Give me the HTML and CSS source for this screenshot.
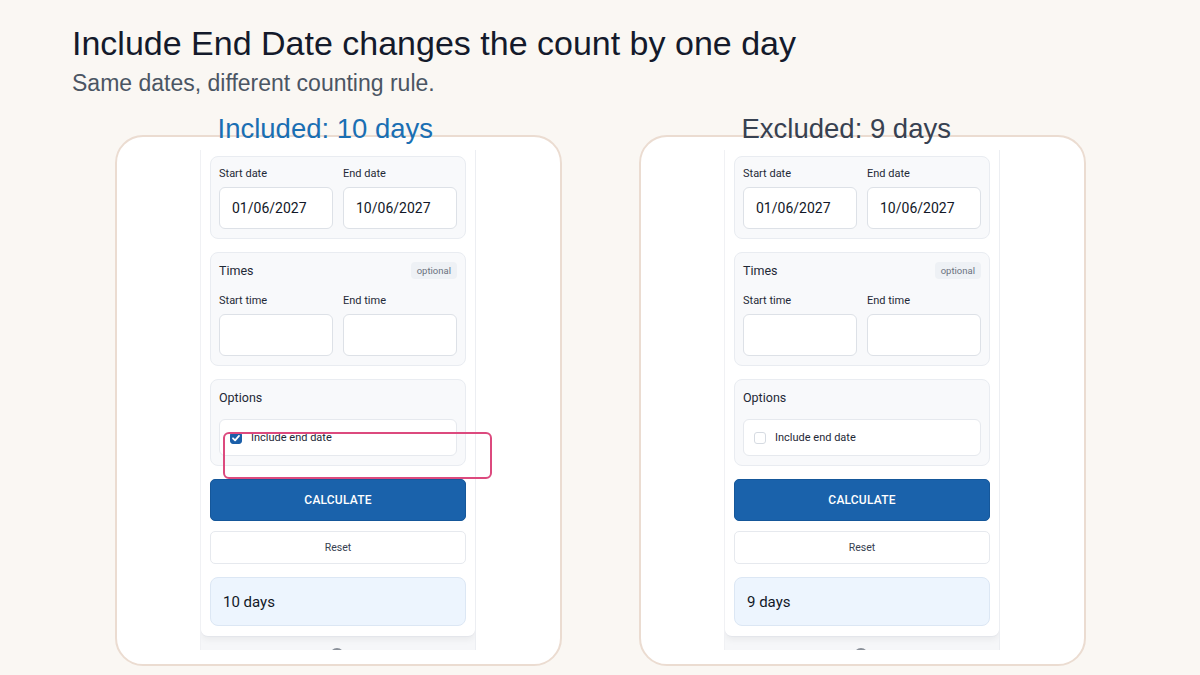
FILE: index.html
```html
<!DOCTYPE html>
<html lang="en">
<head>
    <meta charset="UTF-8">
    <meta name="viewport" content="width=device-width, initial-scale=1.0">
    <title>Include End Date</title>
    <link rel="stylesheet" href="styles.css">
</head>
<body>
    <div class="header">
        <h1>Include End Date changes the count by one day</h1>
        <p class="subtitle">Same dates, different counting rule.</p>
    </div>

    <div class="compare">
        <div class="column">
            <div class="panel-label included">Included: 10 days</div>
            <div class="panel">
                <div class="shot">
                    <div class="page">
                        <div class="form">
                            <div class="section">
                                <div class="field-row">
                                    <div class="field">
                                        <div class="field-label">Start date</div>
                                        <div class="input">01/06/2027</div>
                                    </div>
                                    <div class="field">
                                        <div class="field-label">End date</div>
                                        <div class="input">10/06/2027</div>
                                    </div>
                                </div>
                            </div>
                            <div class="section">
                                <div class="section-head">
                                    <span>Times</span>
                                    <span class="badge">optional</span>
                                </div>
                                <div class="field-row">
                                    <div class="field">
                                        <div class="field-label">Start time</div>
                                        <div class="input"></div>
                                    </div>
                                    <div class="field">
                                        <div class="field-label">End time</div>
                                        <div class="input"></div>
                                    </div>
                                </div>
                            </div>
                            <div class="section">
                                <div class="section-head"><span>Options</span></div>
                                <div class="check-row">
                                    <span class="checkbox checked">
                                        <svg width="12" height="12" viewBox="0 0 12 12"><polyline points="3,6.3 5.1,8.3 9,3.9" fill="none" stroke="#fff" stroke-width="1.8" stroke-linecap="round" stroke-linejoin="round"/></svg>
                                    </span>
                                    Include end date
                                </div>
                            </div>
                            <div class="btn btn-primary">CALCULATE</div>
                            <div class="btn btn-secondary">Reset</div>
                            <div class="result">10 days</div>
                        </div>
                        <div class="page-footer"><span class="footer-icon"></span></div>
                    </div>
                    <div class="highlight"></div>
                </div>
            </div>
        </div>

        <div class="column">
            <div class="panel-label excluded">Excluded: 9 days</div>
            <div class="panel">
                <div class="shot">
                    <div class="page">
                        <div class="form">
                            <div class="section">
                                <div class="field-row">
                                    <div class="field">
                                        <div class="field-label">Start date</div>
                                        <div class="input">01/06/2027</div>
                                    </div>
                                    <div class="field">
                                        <div class="field-label">End date</div>
                                        <div class="input">10/06/2027</div>
                                    </div>
                                </div>
                            </div>
                            <div class="section">
                                <div class="section-head">
                                    <span>Times</span>
                                    <span class="badge">optional</span>
                                </div>
                                <div class="field-row">
                                    <div class="field">
                                        <div class="field-label">Start time</div>
                                        <div class="input"></div>
                                    </div>
                                    <div class="field">
                                        <div class="field-label">End time</div>
                                        <div class="input"></div>
                                    </div>
                                </div>
                            </div>
                            <div class="section">
                                <div class="section-head"><span>Options</span></div>
                                <div class="check-row">
                                    <span class="checkbox"></span>
                                    Include end date
                                </div>
                            </div>
                            <div class="btn btn-primary">CALCULATE</div>
                            <div class="btn btn-secondary">Reset</div>
                            <div class="result">9 days</div>
                        </div>
                        <div class="page-footer"><span class="footer-icon"></span></div>
                    </div>
                </div>
            </div>
        </div>
    </div>
</body>
</html>
```

FILE: styles.css
```css
* {
    margin: 0;
    padding: 0;
    box-sizing: border-box;
}

body {
    font-family: 'Liberation Sans', Arial, sans-serif;
    background: #faf7f3;
    width: 1200px;
    height: 675px;
    overflow: hidden;
}

.header {
    padding: 24px 72px 0;
}

.header h1 {
    font-size: 34px;
    line-height: 39px;
    font-weight: 400;
    color: #141a2b;
}

.subtitle {
    margin-top: 7px;
    font-size: 23px;
    line-height: 26px;
    color: #4b5563;
}

.compare {
    display: flex;
    justify-content: center;
    gap: 77px;
    margin-top: 17px;
}

.column {
    width: 447px;
}

.panel-label {
    position: relative;
    z-index: 1;
    margin-left: 103px;
    margin-bottom: -10px;
    font-size: 27.5px;
    line-height: 32px;
}

.panel-label.included {
    color: #1a6fb3;
}

.panel-label.excluded {
    color: #374151;
}

.panel {
    height: 531px;
    padding-top: 13px;
    background: #fff;
    border: 2px solid #ebdcd1;
    border-radius: 28px;
}

.shot {
    position: relative;
    width: 276px;
    height: 500px;
    margin: 0 auto;
}

.page {
    height: 100%;
    overflow: hidden;
    background: #f6f7f9;
    border-left: 1px solid #f0f1f4;
    border-right: 1px solid #eceef2;
    font-family: Roboto, 'Liberation Sans', sans-serif;
}

.form {
    background: #fff;
    padding: 6px 9px 10px 9px;
    border-radius: 0 0 7px 7px;
    border-bottom: 1px solid #e4e6eb;
    box-shadow: 0 3px 6px rgba(0, 0, 0, 0.05);
}

.section {
    background: #f8f9fb;
    border: 1px solid #e9ecf1;
    border-radius: 8px;
    padding: 8px 8px 9px;
    margin-bottom: 13px;
}

.section-head {
    display: flex;
    justify-content: space-between;
    align-items: center;
    height: 18px;
    margin-bottom: 13px;
    font-size: 12.5px;
    color: #1f2937;
}

.badge {
    font-size: 9.5px;
    line-height: 17px;
    padding: 0 6px;
    border-radius: 4px;
    background: #eef1f5;
    color: #6b7280;
}

.field-row {
    display: flex;
    gap: 10px;
}

.field {
    flex: 1;
}

.field-label {
    font-size: 11px;
    line-height: 15px;
    padding-top: 1px;
    margin-bottom: 6px;
    color: #1f2937;
}

.input {
    height: 42px;
    padding-left: 12px;
    background: #fff;
    border: 1px solid #dde1e7;
    border-radius: 6px;
    font-size: 14px;
    line-height: 40px;
    color: #111827;
}

.check-row {
    display: flex;
    align-items: center;
    gap: 9px;
    height: 37px;
    padding-left: 10px;
    background: #fff;
    border: 1px solid #e6e9ee;
    border-radius: 6px;
    font-size: 11px;
    color: #1f2937;
}

.checkbox {
    display: flex;
    width: 12px;
    height: 12px;
    border: 1px solid #d6dbe2;
    border-radius: 3px;
    background: #fff;
}

.checkbox.checked {
    background: #1b5fa9;
    border-color: #1b5fa9;
}

.checkbox.checked svg {
    margin: -1px;
}

.btn {
    display: flex;
    justify-content: center;
    align-items: center;
    border-radius: 5px;
}

.btn-primary {
    height: 42px;
    background: #1a62ab;
    border: 1px solid #15579a;
    color: #fff;
    font-size: 12px;
    font-weight: 500;
    letter-spacing: 0.2px;
}

.btn-secondary {
    height: 33px;
    margin-top: 10px;
    background: #fff;
    border: 1px solid #e6e9ee;
    color: #374151;
    font-size: 10.5px;
}

.result {
    height: 49px;
    margin-top: 13px;
    padding-left: 12px;
    background: #edf5fe;
    border: 1px solid #dce7f4;
    border-radius: 8px;
    font-size: 15px;
    line-height: 48px;
    color: #111827;
}

.page-footer {
    height: 20px;
    padding-left: 129px;
}

.footer-icon {
    display: block;
    width: 14px;
    height: 14px;
    margin-top: 11px;
    border-radius: 50%;
    background: #8a9099;
}

.highlight {
    position: absolute;
    left: 23px;
    top: 282px;
    width: 269px;
    height: 47px;
    border: 2px solid #dc4a7e;
    border-radius: 6px;
}
```
